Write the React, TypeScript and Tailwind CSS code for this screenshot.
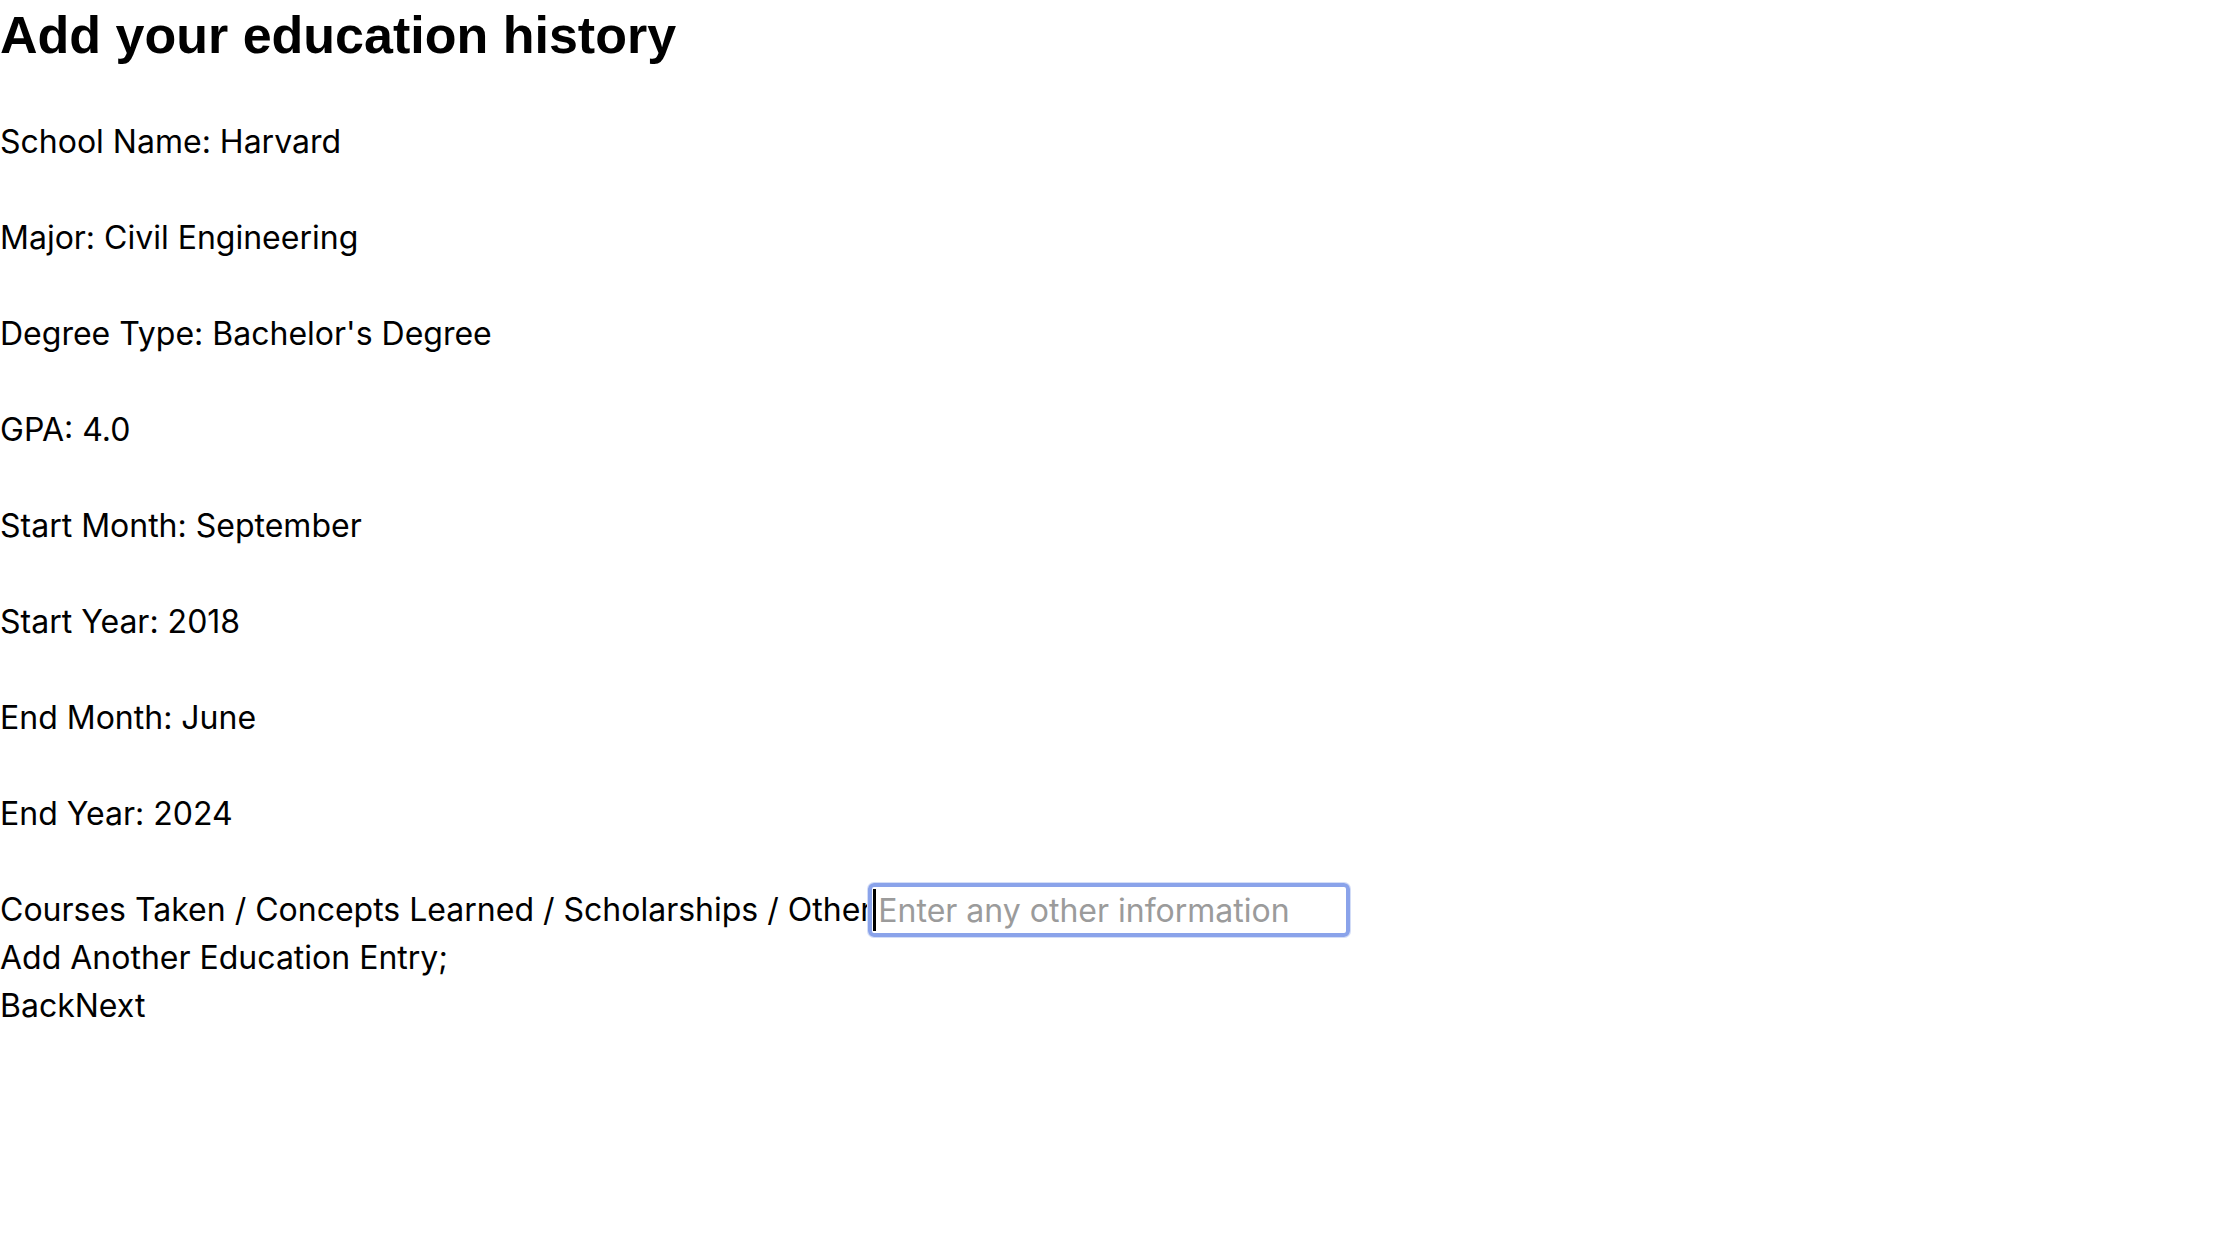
import React from 'react';

const fields = [
  { label: 'School Name', value: 'Harvard' },
  { label: 'Major', value: 'Civil Engineering' },
  { label: 'Degree Type', value: "Bachelor's Degree" },
  { label: 'GPA', value: '4.0' },
  { label: 'Start Month', value: 'September' },
  { label: 'Start Year', value: '2018' },
  { label: 'End Month', value: 'June' },
  { label: 'End Year', value: '2024' },
];

export default function App() {
  return (
    <div className="min-h-screen bg-white text-black">
      <h1 className="font-['Liberation_Sans',Arial,sans-serif] text-[52px] font-bold leading-[70px]">
        Add your education history
      </h1>

      <div className="mt-[48px] flex flex-col gap-12 font-['Inter',sans-serif] text-[32px] leading-[48px]">
        {fields.map((f) => (
          <div key={f.label} className="h-12">
            {f.label}: {f.value}
          </div>
        ))}

        <div className="flex h-12 items-center">
          <span>Courses Taken / Concepts Learned / Scholarships / Other</span>
          <div className="relative -ml-[4px]">
            <input
              type="text"
              placeholder="Enter any other information"
              className="h-[54px] w-[482px] rounded-[6px] border-[4px] border-[#8aa3ea] pl-[6px] text-[32px] outline-none ring-1 ring-[#d3ddf7] placeholder:text-[#9b9b9b]"
            />
            {/* text caret */}
            <span className="absolute left-[5px] top-[6px] h-[42px] w-[3px] bg-black" />
          </div>
        </div>
      </div>

      <div className="font-['Inter',sans-serif] text-[32px] leading-[48px]">
        <div>Add Another Education Entry;</div>
        <div>
          <span>Back</span>
          <span>Next</span>
        </div>
      </div>
    </div>
  );
}
